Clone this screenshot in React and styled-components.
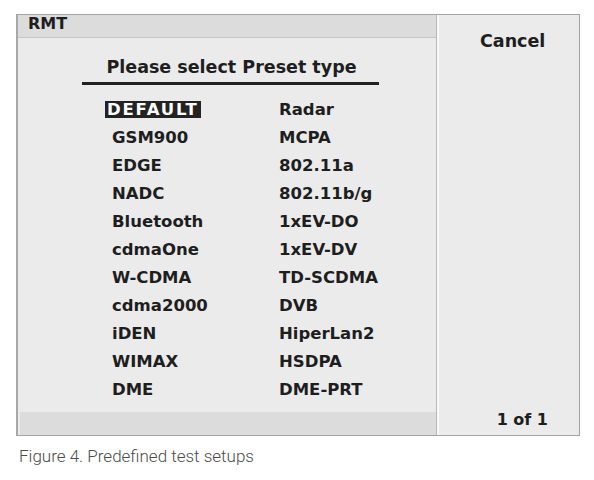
import React from "react";
import styled, { createGlobalStyle } from "styled-components";

const GlobalStyle = createGlobalStyle`
    body {
        margin: 0;
        background: #fff;
    }
`;

const leftItems = [
    "DEFAULT",
    "GSM900",
    "EDGE",
    "NADC",
    "Bluetooth",
    "cdmaOne",
    "W-CDMA",
    "cdma2000",
    "iDEN",
    "WIMAX",
    "DME",
];

const rightItems = [
    "Radar",
    "MCPA",
    "802.11a",
    "802.11b/g",
    "1xEV-DO",
    "1xEV-DV",
    "TD-SCDMA",
    "DVB",
    "HiperLan2",
    "HSDPA",
    "DME-PRT",
];

const App = () => {
    const items = [...leftItems, ...rightItems];

    return (
        <Page>
            <GlobalStyle />
            <Frame>
                <MainPanel>
                    <Header>RMT</Header>
                    <Body>
                        <Title>Please select Preset type</Title>
                        <PresetGrid>
                            {items.map((name, i) => (
                                <Cell key={name}>
                                    <Item selected={i === 0}>{name}</Item>
                                </Cell>
                            ))}
                        </PresetGrid>
                    </Body>
                    <Footer />
                </MainPanel>
                <SidePanel>
                    <CancelButton>Cancel</CancelButton>
                    <PageCount>1 of 1</PageCount>
                </SidePanel>
            </Frame>
            <Caption>Figure 4. Predefined test setups</Caption>
        </Page>
    );
};

const Page = styled.div`
    padding: 14px 0 0 16px;
`;

const Frame = styled.div`
    width: 564px;
    height: 422px;
    box-sizing: border-box;
    border: 1px solid #a4a4a4;
    border-left: 2px solid #a8a8a8;
    display: flex;
    background: #ebebeb;
    font-family: "DejaVu Sans", Verdana, sans-serif;
    font-weight: bold;
    color: #1e1e1e;
`;

const MainPanel = styled.div`
    width: 418px;
    display: flex;
    flex-direction: column;
    border-right: 1px solid #b8b8b8;
`;

const Header = styled.div`
    height: 23px;
    box-sizing: border-box;
    background: #dcdcdc;
    border-bottom: 1px solid #c6c6c6;
    padding-left: 10px;
    font-size: 16px;
    line-height: 17px;
`;

const Body = styled.div`
    flex: 1;
    padding-top: 19px;
`;

const Title = styled.div`
    width: 297px;
    margin-left: 64px;
    padding-bottom: 5px;
    border-bottom: 3px solid #222;
    text-align: center;
    font-size: 17.5px;
    line-height: 20px;
    padding-left: 2px;
    box-sizing: border-box;
`;

const PresetGrid = styled.div`
    margin-top: 10px;
    padding-left: 94px;
    display: grid;
    grid-auto-flow: column;
    grid-template-columns: 167px 1fr;
    grid-template-rows: repeat(11, 28.1px);
`;

const Cell = styled.div`
    display: flex;
    align-items: center;
`;

const Item = styled.span`
    font-size: 16.5px;
    line-height: 17px;
    white-space: nowrap;
    ${(p) =>
        p.selected &&
        `
        background: #232323;
        color: #fff;
        margin-left: -7px;
        padding: 0 2px 0 2px;
        letter-spacing: 1.8px;
    `}
`;

const Footer = styled.div`
    height: 23px;
    margin-left: 2px;
    background: #dcdcdc;
`;

const SidePanel = styled.div`
    flex: 1;
    border-left: 2px solid #f8f8f8;
    display: flex;
    flex-direction: column;
    justify-content: space-between;
`;

const CancelButton = styled.div`
    padding: 16px 0 0 41px;
    font-size: 17.5px;
    line-height: 20px;
`;

const PageCount = styled.div`
    padding: 0 31px 6px 0;
    text-align: right;
    font-size: 16px;
    line-height: 18px;
`;

const Caption = styled.div`
    margin: 11px 0 0 3px;
    font-family: Roboto, "Liberation Sans", sans-serif;
    font-weight: 300;
    font-size: 17px;
    line-height: 18px;
    color: #4c4c4c;
`;

export default App;
